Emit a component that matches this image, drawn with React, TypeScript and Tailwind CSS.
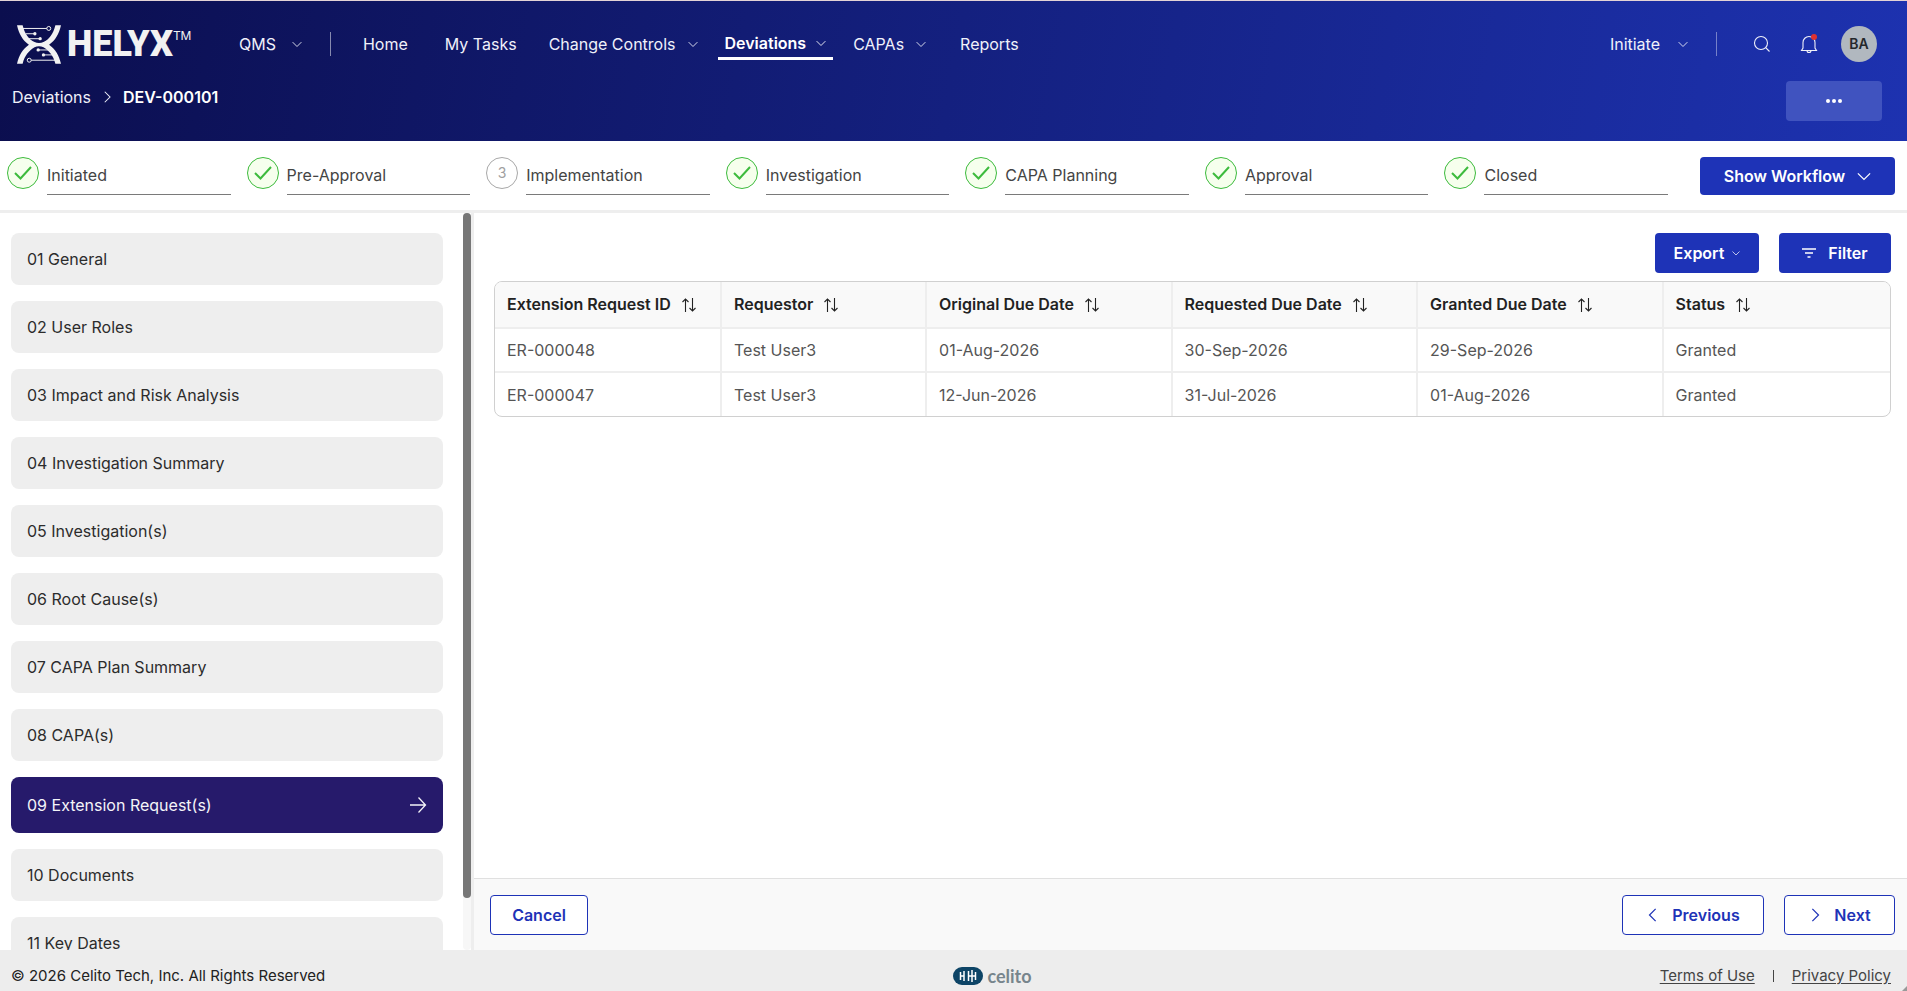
import React from "react";

const chevronPaths = {
  down: "M1 5l7 7 7-7",
  right: "M5 1l7 7-7 7",
  left: "M11 1L4 8l7 7",
};

function Chevron({ dir = "down", className = "size-2.5" }: { dir?: keyof typeof chevronPaths; className?: string }) {
  return (
    <svg viewBox="0 0 16 16" fill="none" stroke="currentColor" strokeWidth="1.4" className={`shrink-0 ${className}`} aria-hidden="true">
      <path d={chevronPaths[dir]} />
    </svg>
  );
}

function HelyxLogo() {
  return (
    <a href="#" aria-label="Helyx home" className="flex h-10 w-[180px] shrink-0 items-center text-[#f2f2f2]">
      <svg viewBox="0 0 133 117" className="h-[39px] w-11 shrink-0" aria-hidden="true">
        <g fill="currentColor">
          <path d="M0 0h17c6 26 20 44 36 51 8 4 19 4 27 0 16-7 30-25 36-51h17c-6 28-18 46-36 59 18 13 30 30 36 58h-17c-6-26-20-40-36-50-8-4-19-4-27 0-16 10-30 24-36 50H0c6-28 18-45 36-58C18 46 6 28 0 0z" />
          <circle cx="54" cy="26" r="5" />
          <circle cx="70" cy="41" r="5" />
          <circle cx="64" cy="75" r="5" />
          <circle cx="80" cy="90" r="5" />
        </g>
        <g fill="none" stroke="currentColor" strokeWidth="3">
          <path d="M18 10h72M26 26h26M36 41h32M66 75h32M82 90h26M43 106h72" />
          <circle cx="96" cy="10" r="6" />
          <circle cx="37" cy="106" r="6" />
        </g>
      </svg>
      <span className="ml-1.5 font-[Roboto,sans-serif] text-4xl leading-10 font-black">HELYX</span>
      <span className="-mt-4 text-xs leading-4">TM</span>
    </a>
  );
}

function NavItem({ label, menu, active }: { label: string; menu?: boolean; active?: boolean }) {
  return (
    <a
      href="#"
      aria-current={active ? "page" : undefined}
      className={
        active
          ? "flex h-8 items-center gap-2.5 border-b-3 border-white px-[7px] font-semibold text-white"
          : "flex h-8 items-center gap-3"
      }
    >
      {label}
      {menu && <Chevron />}
    </a>
  );
}

function Header() {
  return (
    <header className="h-[141px] shrink-0 border-t border-[#e3d3d6] bg-[linear-gradient(100deg,#0b0e4e,#1d32b0)] text-[#f0f1fa]">
      <div className="flex h-[86px] items-center pr-[30px] pl-[17px]">
        <HelyxLogo />
        <button type="button" className="ml-[42px] flex items-center gap-4">
          QMS
          <Chevron />
        </button>
        <span className="ml-7 h-6 w-px bg-white/50" />
        <nav className="ml-8 flex items-center">
          <NavItem label="Home" />
          <span className="w-[37px]" />
          <NavItem label="My Tasks" />
          <span className="w-8" />
          <NavItem label="Change Controls" menu />
          <span className="w-5" />
          <NavItem label="Deviations" menu active />
          <span className="w-5" />
          <NavItem label="CAPAs" menu />
          <span className="w-[34px]" />
          <NavItem label="Reports" />
        </nav>
        <div className="ml-auto flex items-center">
          <button type="button" className="flex items-center gap-[18px]">
            Initiate
            <Chevron />
          </button>
          <span className="ml-7 h-6 w-px bg-white/40" />
          <button type="button" aria-label="Search" className="ml-9">
            <svg viewBox="0 0 18 18" className="size-[18px]" fill="none" stroke="currentColor" strokeWidth="1.1">
              <circle cx="8" cy="8" r="6.5" />
              <path d="M12.7 12.7L16.5 16.5" />
            </svg>
          </button>
          <button type="button" aria-label="Notifications" className="ml-7">
            <svg viewBox="0 0 20 20" className="size-5" fill="none" stroke="currentColor" strokeWidth="1.1">
              <path d="M10 2.500a6 6 0 0 0-6 6v5.500l-1.500 2.500h15L16 14V8.500a6 6 0 0 0-6-6zM8 16.500a2 2 0 0 0 4 0" />
              <circle cx="15" cy="3" r="3" fill="#e03131" stroke="none" />
            </svg>
          </button>
          <button type="button" aria-label="Account" className="ml-[22px] size-9 rounded-full bg-[#b1b8bf] text-sm font-semibold text-[#25282b]">
            BA
          </button>
        </div>
      </div>
      <div className="flex justify-between pr-[25px] pl-3">
        <nav aria-label="Breadcrumb" className="flex h-5 items-center gap-2.5">
          <a href="#">Deviations</a>
          <Chevron dir="right" className="size-3" />
          <span className="font-semibold text-white">DEV-000101</span>
        </nav>
        <button type="button" aria-label="More actions" className="-mt-1.5 flex h-10 w-24 items-center justify-center gap-0.5 rounded bg-[#4053bf]">
          <span className="size-1 rounded-full bg-white" />
          <span className="size-1 rounded-full bg-white" />
          <span className="size-1 rounded-full bg-white" />
        </button>
      </div>
    </header>
  );
}

const steps = ["Initiated", "Pre-Approval", "Implementation", "Investigation", "CAPA Planning", "Approval", "Closed"];

function Workflow() {
  return (
    <section className="flex h-[72px] shrink-0 border-b-3 border-[#eeeeee] pt-4 pr-3 pl-[7px]">
      <ol className="flex flex-1 gap-4">
        {steps.map((step, i) => (
          <li key={step} className="flex min-w-0 flex-1 gap-2">
            {i === 2 ? (
              <span className="flex size-8 shrink-0 items-center justify-center rounded-full border border-[#a8a8a8] text-sm text-[#a0a0a0]">3</span>
            ) : (
              <span className="flex size-8 shrink-0 items-center justify-center rounded-full border border-[#3dbb3d] bg-[#f6ffed] text-[#3dbb3d]">
                <svg viewBox="0 0 18 14" className="h-3.5 w-[18px]" fill="none" stroke="currentColor" strokeWidth="2" aria-hidden="true">
                  <path d="M1 7l5.500 5.500L17 1" />
                </svg>
              </span>
            )}
            <span className="h-[38px] flex-1 border-b border-[#7a7a7a] leading-9 text-[#444444]">{step}</span>
          </li>
        ))}
      </ol>
      <button type="button" className="ml-8 flex h-[38px] w-[195px] items-center justify-center gap-3 rounded bg-[#1e33b7] font-semibold text-white">
        Show Workflow
        <Chevron className="size-3.5" />
      </button>
    </section>
  );
}

const sections = [
  "01 General",
  "02 User Roles",
  "03 Impact and Risk Analysis",
  "04 Investigation Summary",
  "05 Investigation(s)",
  "06 Root Cause(s)",
  "07 CAPA Plan Summary",
  "08 CAPA(s)",
  "09 Extension Request(s)",
  "10 Documents",
  "11 Key Dates",
];

function Sidebar() {
  return (
    <aside className="flex w-[474px] shrink-0 border-r-3 border-[#eeeeee]">
      <nav className="flex flex-1 flex-col gap-4 overflow-y-auto pt-5 pr-5 pl-[11px] [scrollbar-width:none]">
        {sections.map((s, i) =>
          i === 8 ? (
            <a key={s} href="#" aria-current="true" className="flex h-14 shrink-0 items-center justify-between rounded-lg bg-[#261a6b] px-4 text-[#f4f4f8]">
              {s}
              <svg viewBox="0 0 18 18" className="size-[18px]" fill="none" stroke="currentColor" strokeWidth="1.3" aria-hidden="true">
                <path d="M1 9h15.500M9.500 1.500L16.500 9l-7 7.500" />
              </svg>
            </a>
          ) : (
            <a key={s} href="#" className="flex h-[52px] shrink-0 items-center rounded-lg bg-[#eeeeee] px-4 text-[#2c2c2c]">
              {s}
            </a>
          ),
        )}
      </nav>
      <div className="w-2 rounded-full bg-[#f7f7f7]">
        <div className="h-[93%] rounded-full bg-[#777777]" />
      </div>
    </aside>
  );
}

const columns = [
  { label: "Extension Request ID", width: "w-[16.2%]" },
  { label: "Requestor", width: "w-[14.7%]" },
  { label: "Original Due Date", width: "w-[17.6%]" },
  { label: "Requested Due Date", width: "w-[17.6%]" },
  { label: "Granted Due Date", width: "w-[17.6%]" },
  { label: "Status", width: "w-[16.3%]" },
];

const rows = [
  ["ER-000048", "Test User3", "01-Aug-2026", "30-Sep-2026", "29-Sep-2026", "Granted"],
  ["ER-000047", "Test User3", "12-Jun-2026", "31-Jul-2026", "01-Aug-2026", "Granted"],
];

function SortIcon() {
  return (
    <svg viewBox="0 0 16 16" className="mt-0.5 size-4" fill="none" stroke="currentColor" strokeWidth="1.1" aria-hidden="true">
      <path d="M4.500 15V2M1.500 5l3-3 3 3M11.500 1v13M8.500 11l3 3 3-3" />
    </svg>
  );
}

function RequestTable() {
  return (
    <div className="mt-2 overflow-hidden rounded-lg border border-[#d0d0d0]">
      <table className="w-full table-fixed border-collapse text-left">
        <thead className="bg-[#f9f9f9] text-[#222222]">
          <tr className="h-[46px] border-b-2 border-[#eeeeee]">
            {columns.map((c) => (
              <th key={c.label} scope="col" className={`border-r-2 border-[#eeeeee] px-3 pb-0.5 font-semibold last:border-r-0 ${c.width}`}>
                <button type="button" className="flex items-center gap-2.5 whitespace-nowrap">
                  {c.label}
                  <SortIcon />
                </button>
              </th>
            ))}
          </tr>
        </thead>
        <tbody className="text-[#555555]">
          {rows.map((row) => (
            <tr key={row[0]} className="h-11 border-b-2 border-[#eeeeee] last:border-b-0">
              {row.map((cell, i) => (
                <td key={i} className="border-r-2 border-[#eeeeee] px-3 last:border-r-0">
                  {cell}
                </td>
              ))}
            </tr>
          ))}
        </tbody>
      </table>
    </div>
  );
}

const outlineButton = "flex h-10 items-center justify-center rounded border border-[#1e33b7] bg-white font-semibold text-[#1e33b7]";

function Main() {
  return (
    <main className="flex min-w-0 flex-1 flex-col">
      <div className="flex-1 px-4 pt-5 pl-5">
        <div className="flex justify-end gap-5">
          <button type="button" className="flex h-10 w-[104px] items-center justify-center gap-2 rounded bg-[#1e33b7] font-semibold text-white">
            Export
            <Chevron className="size-2" />
          </button>
          <button type="button" className="flex h-10 w-28 items-center justify-center gap-3 rounded bg-[#1e33b7] font-semibold text-white">
            <svg viewBox="0 0 14 10" className="h-2.5 w-3.5" stroke="currentColor" strokeWidth="1.4" aria-hidden="true">
              <path d="M0 1h14M3 5h8M5.500 9h3" />
            </svg>
            Filter
          </button>
        </div>
        <RequestTable />
      </div>
      <div className="flex h-[72px] shrink-0 items-center gap-5 border-t border-[#e0e0e0] bg-[#f9f9f9] pr-3 pl-4">
        <button type="button" className={`${outlineButton} mr-auto w-[98px]`}>
          Cancel
        </button>
        <button type="button" className={`${outlineButton} w-[142px] gap-3`}>
          <Chevron dir="left" className="size-3.5" />
          Previous
        </button>
        <button type="button" className={`${outlineButton} w-[111px] gap-3`}>
          <Chevron dir="right" className="size-3.5" />
          Next
        </button>
      </div>
    </main>
  );
}

function Footer() {
  return (
    <footer className="relative flex h-[41px] shrink-0 items-center justify-between bg-[#ededed] pt-2.5 pr-4 pl-[11px] text-[15px] leading-5 text-[#222222]">
      <p>© 2026 Celito Tech, Inc. All Rights Reserved</p>
      <div className="flex items-center gap-1">
        <svg viewBox="0 0 30 18" className="h-[18px] w-[30px]" aria-hidden="true">
          <rect width="30" height="18" rx="9" fill="#0d4466" />
          <path d="M7.500 5v8M11 4v10M15.500 4v10M19 3v12M22.500 5v8M7.500 9H11M15.500 9h7" stroke="#fff" strokeWidth="1.5" fill="none" />
        </svg>
        <span className="font-[Lato,sans-serif] text-lg leading-5 font-bold text-[#77858c]">celito</span>
      </div>
      <div className="flex items-center gap-[18px] text-[#444444]">
        <a href="#" className="underline underline-offset-2">Terms of Use</a>
        <span className="h-3 w-px bg-[#444444]" />
        <a href="#" className="underline underline-offset-2">Privacy Policy</a>
      </div>
      <svg viewBox="0 0 5 5" className="absolute right-0 bottom-0 size-[5px]" aria-hidden="true">
        <path d="M5 0v5H0z" fill="#999" />
      </svg>
    </footer>
  );
}

export default function App() {
  return (
    <div className="flex h-screen flex-col bg-white font-[Inter,'Liberation_Sans',sans-serif] text-base">
      <Header />
      <Workflow />
      <div className="flex min-h-0 flex-1">
        <Sidebar />
        <Main />
      </div>
      <Footer />
    </div>
  );
}
